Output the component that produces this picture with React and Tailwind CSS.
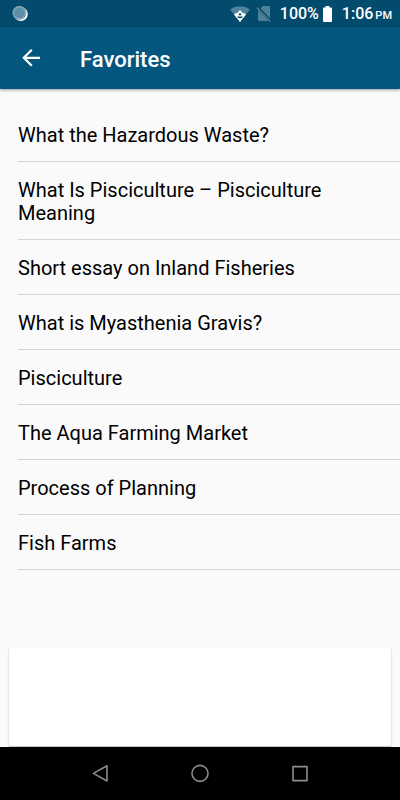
const favorites = [
  'What the Hazardous Waste?',
  'What Is Pisciculture – Pisciculture Meaning',
  'Short essay on Inland Fisheries',
  'What is Myasthenia Gravis?',
  'Pisciculture',
  'The Aqua Farming Market',
  'Process of Planning',
  'Fish Farms',
];

const StatusBar = () => (
  <div className="flex h-[27px] items-center bg-[#034b6c] pl-3 pr-2 text-white">
    {/* Sync spinner */}
    <svg className="h-4 w-4" viewBox="0 0 16 16" fill="none">
      <circle cx="8.8" cy="8" r="7" fill="#fff" />
      <circle cx="7.4" cy="6.8" r="7" fill="#5f8fa6" />
      <circle cx="7.4" cy="6.8" r="6" stroke="#a5c0cd" strokeWidth="1.4" strokeDasharray="1 1" />
    </svg>

    <div className="ml-auto flex items-center">
      {/* Wifi */}
      <svg className="h-4 w-5" viewBox="0 0 20 16" fill="none">
        <path d="M0 3.6C5.8-.8 14.2-.8 20 3.6L10 16Z" fill="#4f819a" />
        <path d="M4 8.4C5.4 7.4 6.6 7 7.6 6.8L10 4L12.4 6.8C13.4 7 14.6 7.4 16 8.4L10 16Z" fill="#fff" />
        <path d="M10 6.6L11.8 9.2H8.2ZM7 10.6H13L12 12H8Z" fill="#034b6c" />
      </svg>

      {/* No sim */}
      <svg className="ml-1.5 h-4 w-4" viewBox="0 0 16 16" fill="none">
        <path d="M6.8 0H12.6Q14 0 14 1.4V12.2L4.6 2.6ZM2.2 4.2L12.6 14.8Q12.4 15 12 15H3.4Q2 15 2 13.6V4.4Z" fill="#4f819a" />
        <path d="M2 2L15 15.4" stroke="#034b6c" strokeWidth="2.2" />
        <path d="M1 1.8L14.4 15.6" stroke="#4f819a" strokeWidth="1.3" />
      </svg>

      <span className="ml-2 text-base font-medium">100%</span>
      <svg className="ml-1 h-4 w-[9px]" viewBox="0 0 9 16">
        <path d="M2.6 0H6.4V1.4H8Q9 1.4 9 2.4V15Q9 16 8 16H1Q0 16 0 15V2.4Q0 1.4 1 1.4H2.6Z" fill="#fff" />
      </svg>
      <div className="ml-2.5 flex items-baseline gap-0.5 font-medium">
        <span className="text-base">1:06</span>
        <span className="text-[11px]">PM</span>
      </div>
    </div>
  </div>
);

const Header = () => (
  <header className="z-10 flex h-[62px] items-center bg-[#03577f] pl-5 pt-0.5 text-white shadow-[0_1px_3px_rgba(0,0,0,0.4)]">
    <button type="button" aria-label="Back" className="flex h-6 w-6 items-center justify-center">
      <svg className="h-5 w-5" viewBox="0 0 20 20" fill="none" stroke="#fff" strokeWidth="2.2">
        <path d="M18 8.8H1.8M9.8 .8L1.8 8.8L9.8 16.8" />
      </svg>
    </button>
    <h1 className="ml-9 text-[22px] font-medium">Favorites</h1>
  </header>
);

const FavoriteList = () => (
  <ul className="pl-[18px] pt-[18px]">
    {favorites.map((title) => (
      <li key={title} className="border-b border-[#d4d4d4]">
        <a href="#" className="block pb-3.5 pr-[18px] pt-[17px] text-xl leading-[23px] text-black">
          {title}
        </a>
      </li>
    ))}
  </ul>
);

const NavBar = () => (
  <nav className="flex h-[53px] items-center justify-center gap-20 bg-black">
    <button type="button" aria-label="Back" className="h-5 w-5">
      <svg viewBox="0 0 20 20" fill="none" stroke="#8c8c8c" strokeWidth="1.6" strokeLinejoin="round">
        <path d="M17 1.8V17L3.4 9.4Z" />
      </svg>
    </button>
    <button type="button" aria-label="Home" className="h-5 w-5">
      <svg viewBox="0 0 20 20" fill="none" stroke="#8c8c8c" strokeWidth="1.6">
        <circle cx="10" cy="9.4" r="8" />
      </svg>
    </button>
    <button type="button" aria-label="Recent apps" className="h-5 w-5">
      <svg viewBox="0 0 20 20" fill="none" stroke="#8c8c8c" strokeWidth="1.6" strokeLinejoin="round">
        <rect x="3" y="2.6" width="14" height="14" />
      </svg>
    </button>
  </nav>
);

const App = () => {
  return (
    <div className="flex min-h-screen flex-col bg-[#fafafa] font-['Roboto',sans-serif]">
      <StatusBar />
      <Header />
      <main className="flex grow flex-col">
        <FavoriteList />
        {/* Ad card */}
        <div className="mx-[9px] mb-px mt-auto h-[98px] rounded-xs bg-white shadow-[0_1px_2px_rgba(0,0,0,0.3)]" />
      </main>
      <NavBar />
    </div>
  );
};

export default App;
